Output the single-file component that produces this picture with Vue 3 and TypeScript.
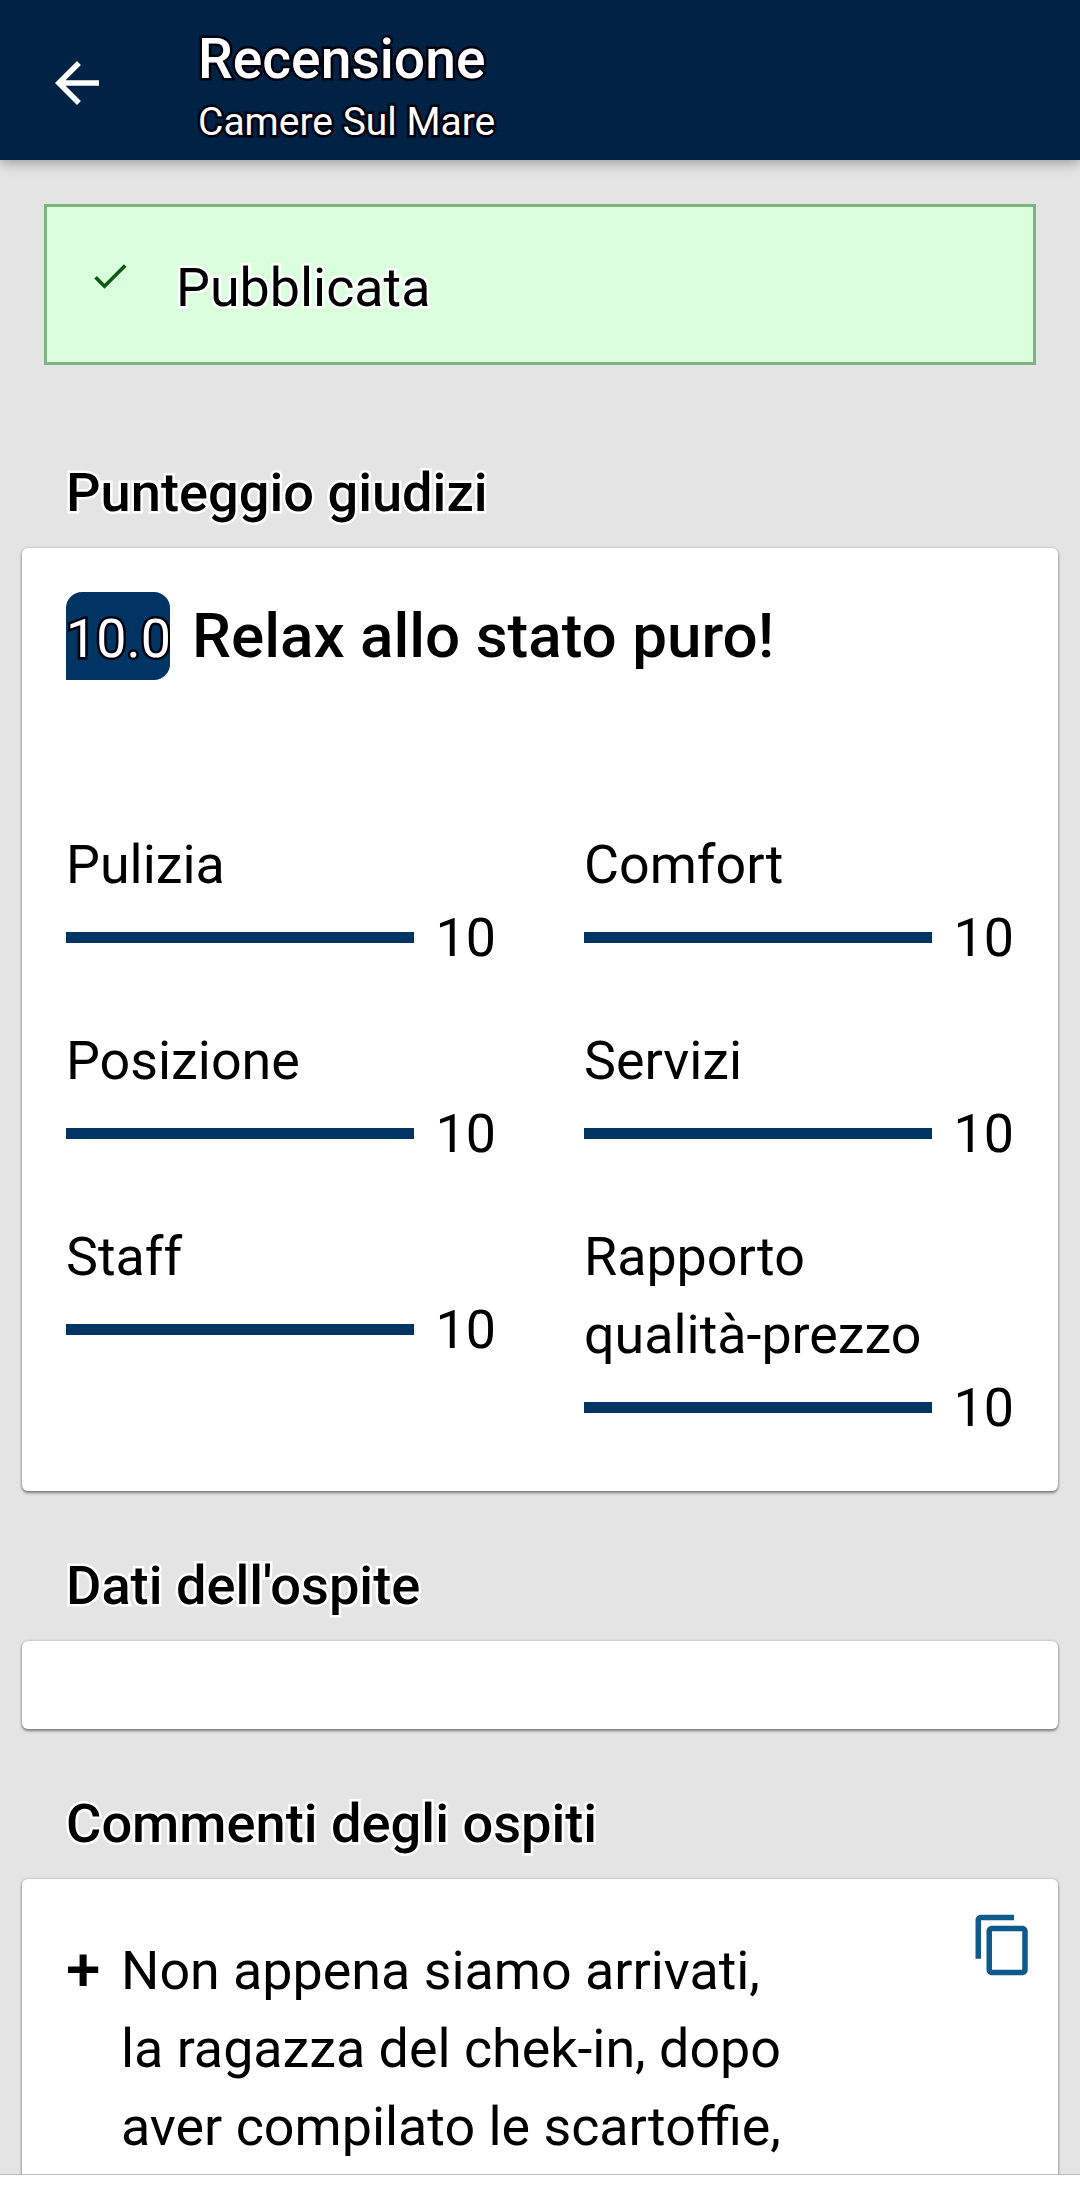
<script setup lang="ts">
interface Score {
  label: string
  value: number
}

const scores: Score[] = [
  { label: 'Pulizia', value: 10 },
  { label: 'Comfort', value: 10 },
  { label: 'Posizione', value: 10 },
  { label: 'Servizi', value: 10 },
  { label: 'Staff', value: 10 },
  { label: 'Rapporto qualità-prezzo', value: 10 },
]

const commentLines: string[] = [
  'Non appena siamo arrivati,',
  'la ragazza del chek-in, dopo',
  'aver compilato le scartoffie,',
]
</script>

<template>
  <div class="screen">
    <header class="app-bar">
      <svg class="back" viewBox="0 0 24 24" aria-label="Indietro">
        <path d="M20 11H7.83l5.59-5.59L12 4l-8 8 8 8 1.41-1.41L7.83 13H20v-2z" />
      </svg>
      <div class="titles">
        <h1>Recensione</h1>
        <p>Camere Sul Mare</p>
      </div>
    </header>

    <main class="content">
      <div class="status">
        <svg class="check" viewBox="0 0 24 24">
          <path d="M9 16.17L4.83 12l-1.42 1.41L9 19 21 7l-1.41-1.41z" />
        </svg>
        <span>Pubblicata</span>
      </div>

      <h2>Punteggio giudizi</h2>
      <section class="card">
        <div class="summary">
          <span class="badge">10.0</span>
          <h3>Relax allo stato puro!</h3>
        </div>
        <div class="scores">
          <div v-for="s in scores" :key="s.label" class="score">
            <div class="label">{{ s.label }}</div>
            <div class="meter">
              <div class="track">
                <div class="fill" :style="{ width: s.value * 10 + '%' }"></div>
              </div>
              <span class="value">{{ s.value }}</span>
            </div>
          </div>
        </div>
      </section>

      <h2>Dati dell'ospite</h2>
      <section class="card guest"></section>

      <h2>Commenti degli ospiti</h2>
      <section class="card comments">
        <span class="plus">+</span>
        <p class="comment">
          <span v-for="line in commentLines" :key="line">{{ line }}</span>
        </p>
        <svg class="copy" viewBox="0 0 24 24" aria-label="Copia">
          <path
            d="M16 1H4c-1.1 0-2 .9-2 2v14h2V3h12V1zm3 4H8c-1.1 0-2 .9-2 2v14c0 1.1.9 2 2 2h11c1.1 0 2-.9 2-2V7c0-1.1-.9-2-2-2zm0 16H8V7h11v14z"
          />
        </svg>
      </section>
    </main>
    <footer class="bottom"></footer>
  </div>
</template>

<style>
body {
  margin: 0;
  background: #fff;
}
</style>

<style scoped>
.screen {
  width: 1080px;
  height: 2189px;
  display: flex;
  flex-direction: column;
  overflow: hidden;
  background: #e4e4e4;
  color: #000;
  font-family: Roboto, 'Liberation Sans', sans-serif;
  font-size: 53.8px;
  line-height: 78px;
}

h1,
h2,
h3,
p {
  margin: 0;
  font-weight: 500;
}

.app-bar {
  flex: none;
  box-sizing: border-box;
  height: 160px;
  padding-left: 44px;
  display: flex;
  align-items: flex-start;
  background: #002244;
  color: #fff;
  -webkit-text-stroke: 5px #00000e;
  paint-order: stroke fill;
  box-shadow: 0 2px 13px rgba(0, 0, 0, 0.36);
  position: relative;
}

.back {
  width: 66px;
  height: 66px;
  margin-top: 50px;
  fill: #fff;
}

.titles {
  margin: 26px 0 0 88px;
}

.titles h1 {
  font-size: 55.2px;
  line-height: 66px;
}

.titles p {
  font-size: 39px;
  line-height: 46px;
  margin-top: 7px;
  font-weight: 400;
}

.content {
  flex: none;
  box-sizing: border-box;
  height: 2014px;
  overflow: hidden;
  padding: 44px 22px 0;
}

.status {
  box-sizing: border-box;
  height: 161px;
  margin: 0 22px 89px;
  padding-left: 41px;
  border: 3px solid #7db37f;
  background: #daffdc;
  display: flex;
  align-items: flex-start;
  -webkit-text-stroke: 5px #fff;
  paint-order: stroke fill;
}

.status span {
  margin: 42px 0 0 44px;
}

.check {
  width: 44px;
  height: 44px;
  margin-top: 47px;
  fill: #0e5c14;
}

h2 {
  margin: 56px 44px 16px;
  font-size: 54.2px;
  -webkit-text-stroke: 5px #fff;
  paint-order: stroke fill;
}

.card {
  box-sizing: border-box;
  background: #fff;
  border-radius: 6px;
  box-shadow: 0 2px 3px rgba(0, 0, 0, 0.42), 0 0 3px rgba(0, 0, 0, 0.22);
  padding: 44px 44px 49px;
}

.summary {
  display: flex;
  align-items: center;
  height: 88px;
  margin-bottom: 146px;
}

.badge {
  width: 104px;
  height: 88px;
  overflow: hidden;
  border-radius: 16px 16px 16px 0;
  background: #003463;
  color: #fff;
  line-height: 93px;
  text-align: center;
  -webkit-text-stroke: 5px #00000e;
  paint-order: stroke fill;
}

h3 {
  margin-left: 22px;
  font-size: 62px;
  line-height: 90px;
}

.scores {
  display: grid;
  grid-template-columns: 430px 430px;
  column-gap: 88px;
  row-gap: 50px;
}

.label {
  width: 348px;
}

.meter {
  display: flex;
  align-items: center;
  gap: 22px;
  height: 68px;
  line-height: 68px;
}

.track {
  width: 348px;
  height: 11px;
  margin-bottom: 1px;
}

.fill {
  height: 11px;
  background: #003463;
}

.guest {
  height: 88px;
  padding: 0;
}

.comments {
  display: flex;
  align-items: flex-start;
  height: 420px;
  padding: 32px 22px 0 44px;
}

.plus {
  width: 55px;
  margin-top: 19px;
  font-size: 62px;
  font-weight: 500;
}

.comment {
  flex: 1;
  margin-top: 21px;
  font-weight: 400;
}

.comment span {
  display: block;
}

.copy {
  width: 66px;
  height: 66px;
  margin-top: 1px;
  fill: #0e5a8a;
}

.bottom {
  flex: 1;
  border-top: 1px solid #bcbcbc;
  background: #fff;
  position: relative;
}
</style>
